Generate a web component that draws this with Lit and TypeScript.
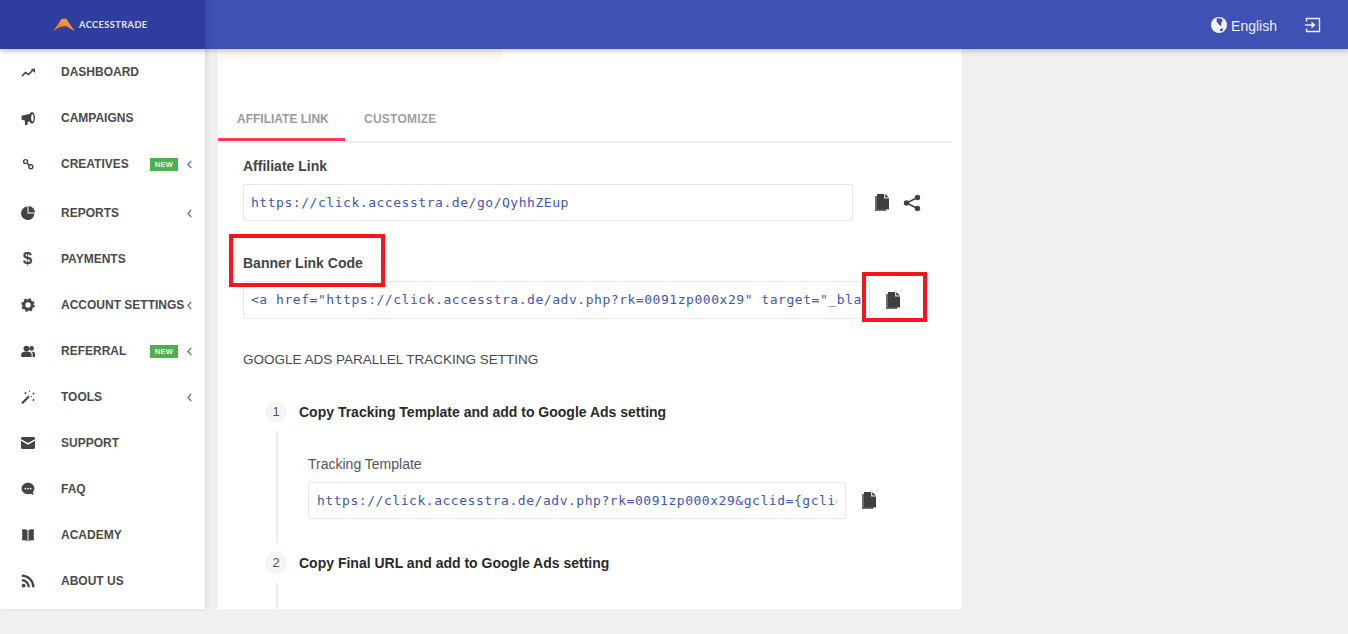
import { LitElement, html, css, svg } from "lit";
import { customElement } from "lit/decorators.js";

const icons: Record<string, any> = {
  trend: svg`<path d="M1 11 4.500 7.500l3 2 4-4" fill="none" stroke="currentColor" stroke-width="1.700"/><path d="M9.800 3.800h4.400v4.400z" fill="currentColor"/>`,
  horn: svg`<path d="M.6 4.800 10 2.500v8.500L.6 8.800z M3.800 9.200 7 9.800 6.200 14.500H4z" fill="currentColor"/><ellipse cx="11" cy="6.800" rx="3" ry="5.800" fill="currentColor"/><ellipse cx="11.400" cy="6.800" rx="1.200" ry="3.600" fill="#fff"/>`,
  link: svg`<circle cx="4.600" cy="4.600" r="2" fill="none" stroke="currentColor" stroke-width="1.400"/><circle cx="9.800" cy="9.800" r="2" fill="none" stroke="currentColor" stroke-width="1.400"/><path d="M6 6 8.400 8.400" stroke="currentColor" stroke-width="1.400"/>`,
  pie: svg`<path d="M6.500 .6A6.700 6.700 0 1 0 13.400 7.500H6.500z" fill="currentColor"/><path d="M7.500 0V6.500H14A6.500 6.500 0 0 0 7.500 0z" fill="currentColor"/>`,
  cog: svg`<circle cx="7" cy="7" r="4.200" fill="none" stroke="currentColor" stroke-width="3"/><circle cx="7" cy="7" r="5.600" fill="none" stroke="currentColor" stroke-width="2.400" stroke-dasharray="2.200 2.200"/>`,
  users: svg`<circle cx="5.400" cy="4.600" r="2.900" fill="currentColor"/><path d="M.2 13v-2.200c0-2 1.600-3.200 5.200-3.200s5.200 1.200 5.200 3.200V13z" fill="currentColor"/><circle cx="10.600" cy="4.400" r="2.300" fill="currentColor"/><path d="M11.600 13h2.800v-2.400c0-1.700-1.400-2.800-3.800-2.800 1 .8 1 1.800 1 3z" fill="currentColor"/>`,
  wand: svg`<path d="M1 13.400 8 6.200" stroke="currentColor" stroke-width="2.200"/><path d="M4.500 2v2M3.500 3h2M12.500 2.500v2M11.500 3.500h2M12.500 9v2M11.500 10h2M8.500 .5v1.600M10 6.500h1" stroke="currentColor" stroke-width=".9" fill="none"/>`,
  mail: svg`<path d="M1.400 1h11.200c.8 0 1.400.6 1.400 1.400v.8L7 7.100 0 3.200v-.8C0 1.600.6 1 1.400 1z" fill="currentColor"/><path d="M0 4.800 7 8.700l7-3.900v6.800c0 .8-.6 1.400-1.400 1.400H1.400C.6 13 0 12.400 0 11.600z" fill="currentColor"/>`,
  chat: svg`<path d="M7 .8c3.600 0 6.400 2.500 6.400 5.700 0 1.500-.6 2.800-1.600 3.800l1 2.900-3-1.400c-.9.3-1.800.4-2.800.4C3.400 12.200.6 9.700.6 6.500S3.400 .8 7 .8z" fill="currentColor"/><circle cx="4.400" cy="6.600" r=".9" fill="#fff"/><circle cx="7" cy="6.600" r=".9" fill="#fff"/><circle cx="9.600" cy="6.600" r=".9" fill="#fff"/>`,
  book: svg`<path d="M1.200 1.400c2-.5 4-.3 5.300.8v11c-1.300-.9-3.300-1.100-5.300-.7zM12.800 1.400c-2-.5-4-.3-5.300.8v11c1.300-.9 3.300-1.100 5.300-.7z" fill="currentColor"/>`,
  rss: svg`<circle cx="2.600" cy="11.600" r="1.900" fill="currentColor"/><path d="M.8 6.200c3.800 0 7 3.200 7 7M.8 1.600c6.400 0 11.600 5.200 11.600 11.600" fill="none" stroke="currentColor" stroke-width="2.300"/>`,
};

const icon = (n: string) => html`<svg class="ico" viewBox="0 0 14 14" width="14" height="14">${icons[n]}</svg>`;

const copy = html`<svg class="copy" viewBox="0 0 14 17" width="14" height="17">
  <path d="M0 2h2v13h9v2H0z" fill="#6e6e6e"/>
  <path d="M2 0h7.200v4.500H14V15.500H2z" fill="#3f3f3f"/>
  <path d="M10.200 0 14 3.500h-3.800z" fill="#3f3f3f"/>
</svg>`;

const share = html`<svg viewBox="0 0 18 18" width="18" height="18">
  <path d="M14.500 3.500 3.500 9l11 5.500" fill="none" stroke="#424242" stroke-width="1.600"/>
  <circle cx="14.500" cy="3.500" r="2.700" fill="#424242"/><circle cx="3.500" cy="9" r="2.700" fill="#424242"/><circle cx="14.500" cy="14.500" r="2.700" fill="#424242"/>
</svg>`;

const nav = [
  { i: "trend", t: "DASHBOARD" },
  { i: "horn", t: "CAMPAIGNS" },
  { i: "link", t: "CREATIVES", n: 1, c: 1, x: 1 },
  { i: "pie", t: "REPORTS", c: 1 },
  { i: "$", t: "PAYMENTS" },
  { i: "cog", t: "ACCOUNT SETTINGS", c: 1 },
  { i: "users", t: "REFERRAL", n: 1, c: 1 },
  { i: "wand", t: "TOOLS", c: 1 },
  { i: "mail", t: "SUPPORT" },
  { i: "chat", t: "FAQ" },
  { i: "book", t: "ACADEMY" },
  { i: "rss", t: "ABOUT US" },
];

@customElement("app-root")
export class AppRoot extends LitElement {
  static styles = css`
    :host { display: block; width: 1348px; height: 634px; overflow: hidden; background: #f0f0f0; font-family: "Liberation Sans", Arial, sans-serif; position: relative; }
    .top { height: 49px; display: flex; background: #3f51b5; position: relative; z-index: 3; box-shadow: 0 2px 5px rgba(0,0,0,.22); }
    .brand { width: 205px; background: #2f3e9e; display: flex; align-items: center; padding-left: 53px; box-sizing: border-box; gap: 3px; box-shadow: 3px 0 6px rgba(0,0,0,.1); }
    .brand span { font: 700 9.2px "Lato", sans-serif; color: #e4e7f5; letter-spacing: .45px; }
    .topright { margin-left: auto; display: flex; align-items: center; color: #eef0fa; font-size: 14px; padding-right: 27px; padding-top: 1px; }
    .lang { margin-left: 4px; margin-right: 28px; padding-top: 2px; }
    .main { display: flex; height: 560px; }
    .side { width: 205px; background: #fff; overflow: hidden; box-shadow: 3px 0 4px rgba(0,0,0,.06); flex: none; position: relative; z-index: 1; }
    .row { height: 46px; display: flex; align-items: center; color: #4a4a4a; position: relative; }
    .row.extra { margin-bottom: 3px; }
    .iconcell { width: 61px; flex: none; display: flex; justify-content: center; padding-right: 6px; box-sizing: border-box; }
    .ico { display: block; color: #444; }
    .dollar { font-size: 17px; font-weight: 700; color: #444; line-height: 14px; }
    .label { font-size: 12px; font-weight: 700; white-space: nowrap; }
    .badge { position: absolute; left: 150px; top: 17px; width: 28px; height: 13px; background: #4caf50; color: #e8f5e9; font-size: 7.5px; font-weight: 700; letter-spacing: .3px; text-align: center; line-height: 13px; }
    .chev { position: absolute; left: 187px; top: 19px; width: 5px; height: 9px; }
    .card { width: 744px; margin-left: 13px; background: #fff; overflow: hidden; flex: none; }
    .band { width: 282px; height: 12px; background: #fdf8f1; margin-left: 1px; }
    .tabs { margin-top: 34px; width: 734px; height: 46px; display: flex; border-bottom: 2px solid #eee; }
    .tab { font-size: 12px; font-weight: 700; color: #a0a0a0; padding: 0 19px; height: 46px; line-height: 48px; box-sizing: border-box; letter-spacing: .24px; }
    .tab.on { width: 127px; padding: 0 0 0 19px; color: #9a9a9a; border-bottom: 3px solid #f23a66; letter-spacing: 0; }
    .form { padding: 14px 0 0 25px; }
    .flabel { font-size: 14px; font-weight: 700; color: #444; line-height: 18px; height: 18px; margin-bottom: 9px; }
    .line { display: flex; align-items: center; }
    .input { box-sizing: border-box; height: 37px; border: 1px solid #e6e6e6; border-radius: 2px; font: 13px "DejaVu Sans Mono", monospace; letter-spacing: .54px; color: #4054bb; line-height: 35px; padding-left: 7px; overflow: hidden; white-space: nowrap; flex: none; }
    .clip { overflow: hidden; }
    .aff { width: 610px; }
    .acts { display: flex; align-items: center; margin-left: 22px; gap: 14px; }
    .ban-label { margin-top: 33px; }
    .ban { width: 627px; height: 38px; line-height: 36px; padding-right: 6px; }
    .banact { margin-left: 16px; display: flex; }
    .h { margin-top: 32px; font-size: 13.5px; line-height: 18px; color: #4a4a4a; }
    .step { display: flex; align-items: center; height: 22px; margin-left: 47px; margin-top: 32px; }
    .step.two { margin-top: 9px; }
    .num { width: 22px; height: 22px; border-radius: 50%; background: #f5f5f5; color: #555; font-size: 13px; line-height: 22px; text-align: center; flex: none; }
    .stitle { margin-left: 12px; font-size: 14px; font-weight: 700; color: #2a2a2a; white-space: nowrap; }
    .sbody { margin: 8px 0 0 58px; border-left: 2px solid #eee; height: 112px; box-sizing: border-box; padding: 24px 0 0 30px; }
    .slabel { font-size: 14px; color: #555; line-height: 18px; margin-bottom: 9px; }
    .tmpl { width: 538px; padding-left: 8px; padding-right: 8px; }
    .tmplact { margin-left: 16px; display: flex; }
    .mark { position: absolute; border: 4px solid #f8141c; box-sizing: border-box; pointer-events: none; z-index: 4; }
    .m1 { left: 229px; top: 234px; width: 156px; height: 53px; }
    .m2 { left: 862px; top: 272px; width: 65px; height: 50px; }
  `;

  render() {
    return html`
      <div class="top">
        <div class="brand">
          <svg viewBox="0 0 23 14" width="23" height="14">
            <defs><linearGradient id="g" x1="0" y1="1" x2="1" y2="0"><stop offset="0" stop-color="#e8661e"/><stop offset="1" stop-color="#f8b04a"/></linearGradient></defs>
            <path d="M0 13.500 8.500 1 13 .5 22 13.500 14 8.500C9 7.500 4 10 0 13.500z" fill="url(#g)"/>
          </svg>
          <span>ACCESSTRADE</span>
        </div>
        <div class="topright">
          <svg viewBox="0 0 16 16" width="16" height="16"><circle cx="8" cy="8" r="8" fill="#f4f5fb"/><path d="M6 1.500c2-.5 4 0 5 .8 1 1.200.5 2.400-.6 3.200-.6 1.300.8 2.600-.6 3.300-1.500-.6-2.700-1.600-3.300-3.300C5 4.500 5.300 3 6 1.500zM9 12c1-.6 2.500-.8 3.300-.3l-1 2.200c-1 .5-1.800.3-2.300-.3z" fill="#3f51b5"/></svg>
          <span class="lang">English</span>
          <svg viewBox="0 0 16 16" width="16" height="16" fill="none" stroke="#eef0fa" stroke-width="1.400"><path d="M1.500 4.500V1.500h13v13h-13v-3"/><path d="M0 8h9"/><path d="M6.500 4.500 10.500 8l-4 3.500z" fill="#eef0fa" stroke="none"/></svg>
        </div>
      </div>
      <div class="main">
        <nav class="side">
          ${nav.map((n) => html`
            <div class="row ${n.x ? "extra" : ""}">
              <div class="iconcell">${n.i === "$" ? html`<span class="dollar">$</span>` : icon(n.i)}</div>
              <span class="label">${n.t}</span>
              ${n.n ? html`<span class="badge">NEW</span>` : ""}
              ${n.c ? html`<svg class="chev" viewBox="0 0 5 9"><path d="M4.300 .8.800 4.500l3.500 3.700" fill="none" stroke="#666" stroke-width="1.200"/></svg>` : ""}
            </div>`)}
        </nav>
        <section class="card">
          <div class="band"></div>
          <div class="tabs">
            <div class="tab on">AFFILIATE LINK</div>
            <div class="tab">CUSTOMIZE</div>
          </div>
          <div class="form">
            <div class="flabel">Affiliate Link</div>
            <div class="line">
              <div class="input aff">https://click.accesstra.de/go/QyhhZEup</div>
              <div class="acts">${copy}${share}</div>
            </div>
            <div class="flabel ban-label">Banner Link Code</div>
            <div class="line">
              <div class="input ban"><div class="clip">&lt;a href="https://click.accesstra.de/adv.php?rk=0091zp000x29" target="_blank"&gt;</div></div>
              <div class="banact">${copy}</div>
            </div>
            <div class="h">GOOGLE ADS PARALLEL TRACKING SETTING</div>
          </div>
          <div class="step"><span class="num">1</span><span class="stitle">Copy Tracking Template and add to Google Ads setting</span></div>
          <div class="sbody">
            <div class="slabel">Tracking Template</div>
            <div class="line">
              <div class="input tmpl"><div class="clip">https://click.accesstra.de/adv.php?rk=0091zp000x29&amp;gclid={gclid}</div></div>
              <div class="tmplact">${copy}</div>
            </div>
          </div>
          <div class="step two"><span class="num">2</span><span class="stitle">Copy Final URL and add to Google Ads setting</span></div>
          <div class="sbody"></div>
        </section>
      </div>
      <div class="mark m1"></div>
      <div class="mark m2"></div>
    `;
  }
}
